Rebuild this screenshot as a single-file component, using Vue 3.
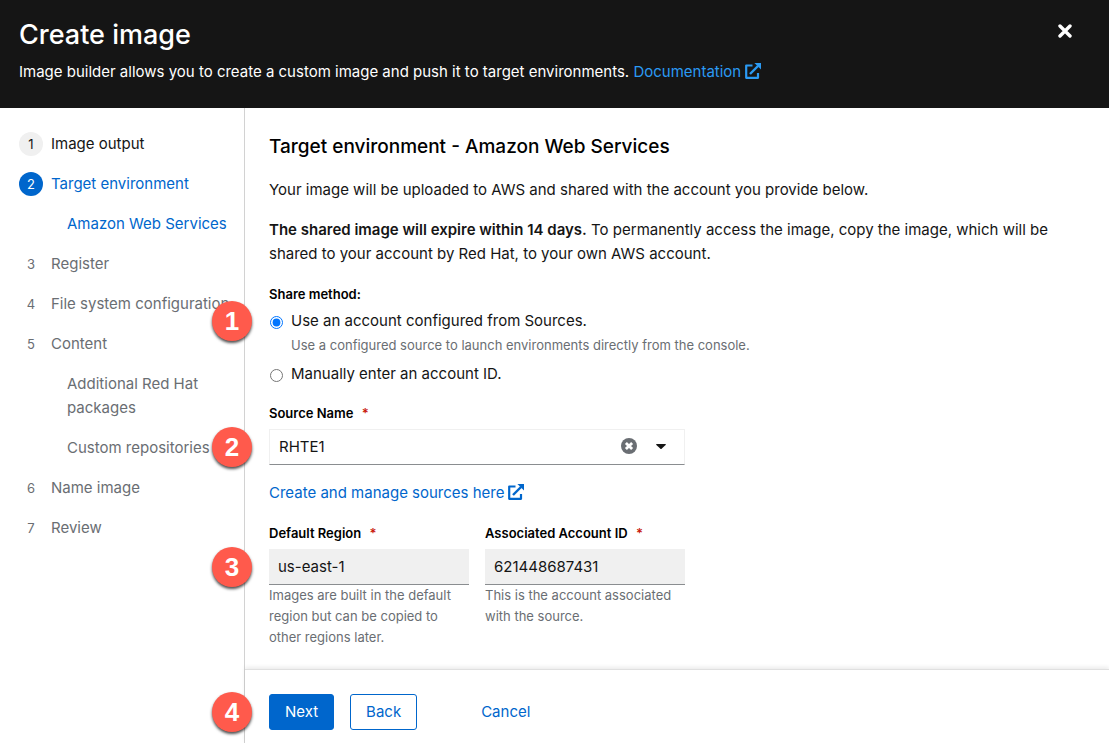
<script setup>
import { ref } from 'vue'

const steps = [
  { n: 1, label: 'Image output', state: 'done' },
  {
    n: 2,
    label: 'Target environment',
    state: 'current',
    children: [{ label: 'Amazon Web Services', state: 'current' }],
  },
  { n: 3, label: 'Register' },
  { n: 4, label: 'File system configuration' },
  {
    n: 5,
    label: 'Content',
    children: [{ label: 'Additional Red Hat packages' }, { label: 'Custom repositories' }],
  },
  { n: 6, label: 'Name image' },
  { n: 7, label: 'Review' },
]

const shareMethod = ref('sources')
const source = ref('RHTE1')
const region = ref('us-east-1')
const accountId = ref('621448687431')
</script>

<template>
  <div class="wizard">
    <header class="header">
      <div>
        <h1>Create image</h1>
        <p>
          Image builder allows you to create a custom image and push it to target environments.
          <a href="#" class="ext">Documentation<svg class="ext-icon" viewBox="0 0 16 16" aria-hidden="true">
            <path d="M7.5 2.5H1.2V14.8H13V10" fill="none" stroke="currentColor" stroke-width="2.2" stroke-linejoin="round" />
            <path d="M5 11L13 3" fill="none" stroke="currentColor" stroke-width="2.4" />
            <path d="M9.4 0H16V6.6Z" fill="currentColor" />
          </svg></a>
        </p>
      </div>
      <button class="close" type="button" aria-label="Close">
        <svg viewBox="0 0 14 14" aria-hidden="true">
          <path d="M2 2L12 12M12 2L2 12" stroke="currentColor" stroke-width="3.4" stroke-linecap="round" />
        </svg>
      </button>
    </header>

    <div class="body">
      <nav class="nav" aria-label="Wizard steps">
        <ol>
          <li v-for="step in steps" :key="step.n">
            <a href="#" class="step" :class="step.state">
              <span class="num">{{ step.n }}</span>
              <span class="step-label">{{ step.label }}</span>
            </a>
            <ol v-if="step.children" class="sub">
              <li v-for="child in step.children" :key="child.label">
                <a href="#" class="step" :class="child.state">{{ child.label }}</a>
              </li>
            </ol>
          </li>
        </ol>
      </nav>

      <div class="panel">
        <main class="content">
          <h2>Target environment - Amazon Web Services</h2>
          <p>Your image will be uploaded to AWS and shared with the account you provide below.</p>
          <p>
            <strong>The shared image will expire within 14 days.</strong> To permanently access the image, copy
            the image, which will be shared to your account by Red Hat, to your own AWS account.
          </p>

          <fieldset class="share">
            <legend>Share method:</legend>
            <div class="radio marked">
              <span class="marker">1</span>
              <input id="share-sources" v-model="shareMethod" type="radio" name="share" value="sources" />
              <label for="share-sources">Use an account configured from Sources.</label>
            </div>
            <p class="hint">Use a configured source to launch environments directly from the console.</p>
            <div class="radio">
              <input id="share-manual" v-model="shareMethod" type="radio" name="share" value="manual" />
              <label for="share-manual">Manually enter an account ID.</label>
            </div>
          </fieldset>

          <div class="field source">
            <label for="source">Source Name <span class="req">*</span></label>
            <div class="select marked">
              <span class="marker">2</span>
              <select id="source" v-model="source">
                <option value="RHTE1">RHTE1</option>
              </select>
              <button class="clear" type="button" aria-label="Clear selection">
                <svg viewBox="0 0 16 16" aria-hidden="true">
                  <circle cx="8" cy="8" r="8" fill="#6a6e73" />
                  <path d="M4.9 4.9L11.1 11.1M11.1 4.9L4.9 11.1" stroke="#fff" stroke-width="2.8" />
                </svg>
              </button>
              <svg class="caret" viewBox="0 0 10 5" aria-hidden="true">
                <path d="M0.6 0H9.4Q10.2 0.2 9.6 0.9L5.6 4.7Q5 5.2 4.4 4.7L0.4 0.9Q-0.2 0.2 0.6 0Z" fill="#151515" />
              </svg>
            </div>
          </div>

          <p class="manage">
            <a href="#" class="ext">Create and manage sources here<svg class="ext-icon" viewBox="0 0 16 16" aria-hidden="true">
              <path d="M7.5 2.5H1.2V14.8H13V10" fill="none" stroke="currentColor" stroke-width="2.2" stroke-linejoin="round" />
              <path d="M5 11L13 3" fill="none" stroke="currentColor" stroke-width="2.4" />
              <path d="M9.4 0H16V6.6Z" fill="currentColor" />
            </svg></a>
          </p>

          <div class="pair">
            <div class="field">
              <label for="region">Default Region <span class="req">*</span></label>
              <div class="marked">
                <span class="marker">3</span>
                <input id="region" v-model="region" type="text" readonly aria-describedby="region-hint" />
              </div>
              <p id="region-hint" class="hint">
                Images are built in the default region but can be copied to other regions later.
              </p>
            </div>
            <div class="field">
              <label for="account">Associated Account ID <span class="req">*</span></label>
              <input id="account" v-model="accountId" type="text" readonly aria-describedby="account-hint" />
              <p id="account-hint" class="hint">This is the account associated with the source.</p>
            </div>
          </div>
        </main>

        <footer class="footer">
          <div class="marked">
            <span class="marker">4</span>
            <button class="btn primary" type="button">Next</button>
          </div>
          <button class="btn secondary" type="button">Back</button>
          <button class="btn link" type="button">Cancel</button>
        </footer>
      </div>
    </div>
  </div>
</template>

<style>
body {
  margin: 0;
  background: #fff;
}
</style>

<style scoped>
.wizard {
  display: flex;
  flex-direction: column;
  min-height: 100vh;
  font-family: Inter, "Liberation Sans", sans-serif;
  font-size: 15px;
  line-height: 24px;
  color: #151515;
}

.wizard *,
.wizard {
  box-sizing: border-box;
}

h1,
h2,
p,
ol,
fieldset {
  margin: 0;
  padding: 0;
  border: 0;
  list-style: none;
}

a {
  color: #06c;
  text-decoration: none;
}

button,
input,
select {
  font: inherit;
  color: inherit;
}

.header {
  display: flex;
  justify-content: space-between;
  align-items: flex-start;
  padding: 16px 29px 24px 19px;
  background: #151515;
  color: #fff;
}

h1 {
  font-size: 27px;
  font-weight: 500;
  line-height: 38px;
  margin-bottom: 6px;
}

.header a {
  color: #2b9af3;
}

.ext-icon {
  width: 16px;
  height: 16px;
  margin-left: 4px;
  vertical-align: -2px;
}

.close {
  display: flex;
  padding: 8px;
  border: 0;
  background: none;
}

.close svg {
  width: 14px;
  height: 14px;
}

.body {
  display: flex;
  flex: 1;
}

.nav {
  flex: 0 0 245px;
  padding: 24px 8px 24px 19px;
  border-right: 1px solid #d2d2d2;
}

.nav ol {
  display: flex;
  flex-direction: column;
  gap: 16px;
}

.nav .sub {
  margin-top: 16px;
  padding-left: 48px;
}

.step {
  display: flex;
  gap: 8px;
  color: #6a6e73;
}

.step-label {
  white-space: nowrap;
}

.num {
  flex: 0 0 24px;
  height: 24px;
  border-radius: 50%;
  font-size: 13px;
  text-align: center;
}

.step.done {
  color: #151515;
}

.step.done .num {
  background: #f0f0f0;
}

.step.current {
  color: #06c;
}

.step.current .num {
  background: #06c;
  color: #fff;
}

.panel {
  display: flex;
  flex: 1;
  flex-direction: column;
  min-width: 0;
}

.content {
  flex: 1;
  padding: 24px 24px 20px;
}

h2 {
  font-size: 19px;
  font-weight: 500;
  line-height: 30px;
  color: #000;
}

.content > p {
  max-width: 800px;
  margin-top: 16px;
}

strong {
  font-weight: 600;
}

.share {
  margin-top: 18px;
}

legend,
.field label {
  display: block;
  padding: 0;
  font-size: 13px;
  font-weight: 600;
  line-height: 21px;
  color: #000;
}

.radio {
  display: flex;
  gap: 8px;
  align-items: center;
  margin-top: 4px;
}

.radio input {
  width: 13px;
  height: 13px;
  margin: 2px 0 0 1px;
  accent-color: #0075ff;
}

.hint {
  font-size: 13px;
  line-height: 21px;
  color: #6a6e73;
}

.share .hint {
  margin: 2px 0 6px;
  padding-left: 22px;
}

.field label {
  margin-bottom: 5px;
}

.req {
  margin-left: 5px;
  color: #c9190b;
}

.source {
  max-width: 416px;
  margin-top: 17px;
}

.marked {
  position: relative;
}

.marker {
  position: absolute;
  z-index: 1;
  top: calc(50% - 20px);
  left: -57px;
  width: 40px;
  height: 40px;
  border-radius: 50%;
  background: #ff5a4c;
  box-shadow: 0 2px 3px rgba(0, 0, 0, 0.7);
  color: #fff;
  font-family: "Liberation Sans", Arial, sans-serif;
  font-size: 26px;
  font-weight: 700;
  line-height: 40px;
  text-align: center;
}

.select select {
  display: block;
  width: 100%;
  height: 36px;
  padding: 0 72px 0 9px;
  border: 1px solid #f0f0f0;
  border-bottom-color: #8a8d90;
  border-radius: 0;
  background: #fff;
  appearance: none;
}

.clear {
  position: absolute;
  top: 9px;
  right: 48px;
  display: flex;
  padding: 0;
  border: 0;
  background: none;
}

.clear svg {
  width: 16px;
  height: 16px;
}

.caret {
  position: absolute;
  top: 15px;
  right: 19px;
  width: 10px;
  height: 5px;
  pointer-events: none;
}

.pair {
  display: grid;
  grid-template-columns: 1fr 1fr;
  gap: 16px;
  max-width: 416px;
  margin-top: 18px;
}

.field input {
  display: block;
  width: 100%;
  height: 36px;
  padding: 0 9px;
  border: 0;
  border-bottom: 1px solid #8a8d90;
  border-radius: 0;
  background: #f0f0f0;
}

.footer {
  display: flex;
  padding: 24px 24px 13px;
  border-top: 1px solid #e0e0e0;
  box-shadow: 0 -2px 4px rgba(0, 0, 0, 0.08);
}

.btn {
  height: 36px;
  padding: 0 15px;
  border: 1px solid #06c;
  border-radius: 3px;
  background: #fff;
  color: #06c;
}

.btn.primary {
  background: #06c;
  color: #fff;
}

.btn.secondary {
  margin-left: 16px;
}

.btn.link {
  margin-left: 48px;
  border-color: transparent;
}
</style>
